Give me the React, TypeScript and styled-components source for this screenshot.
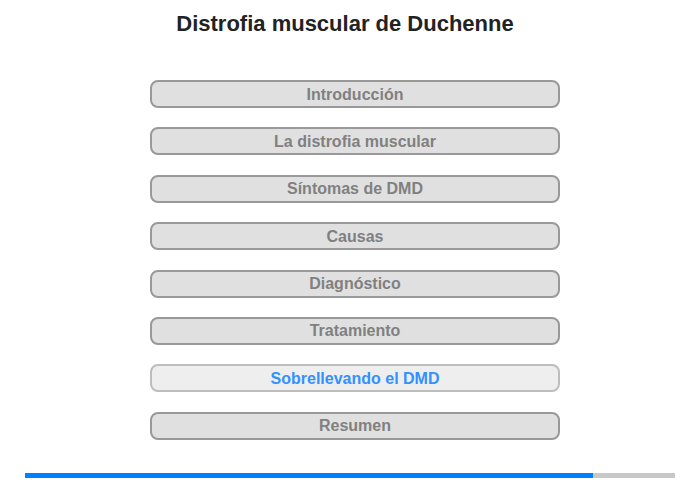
import styled, { createGlobalStyle } from "styled-components";

const GlobalStyle = createGlobalStyle`
  html, body {
    margin: 0;
    padding: 0;
    background: #ffffff;
  }
  body {
    font-family: "Liberation Sans", Arial, sans-serif;
  }
`;

const Page = styled.div`
  width: 700px;
  height: 480px;
  display: flex;
  flex-flow: column;
  overflow: hidden;
`;

const Title = styled.h1`
  margin: 11px 10px 0 0;
  height: 26px;
  font-size: 22px;
  line-height: 26px;
  font-weight: 700;
  color: #222222;
  text-align: center;
`;

const Menu = styled.nav`
  display: flex;
  flex-flow: column;
  gap: 19.4px;
  width: 410px;
  margin: 43px 0 0 150px;
`;

const MenuButton = styled.button<{ $active?: boolean }>`
  box-sizing: border-box;
  height: 28px;
  width: 100%;
  padding: 0;
  border-radius: 8px;
  border: 2px solid ${(p) => (p.$active ? "#bdbdbd" : "#999999")};
  background: ${(p) => (p.$active ? "#eeeeee" : "#e0e0e0")};
  color: ${(p) => (p.$active ? "#3390ff" : "#808080")};
  font-family: "Liberation Sans", Arial, sans-serif;
  font-size: 16px;
  font-weight: 700;
  line-height: 23px;
  text-align: center;
  cursor: pointer;
`;

const Progress = styled.div`
  display: flex;
  height: 5px;
  margin: auto 25px 2px 25px;
  background: #c8c8c8;
`;

const ProgressFill = styled.div`
  height: 100%;
  background: #0080ff;
`;

const items = [
  "Introducción",
  "La distrofia muscular",
  "Síntomas de DMD",
  "Causas",
  "Diagnóstico",
  "Tratamiento",
  "Sobrellevando el DMD",
  "Resumen",
];

const activeIndex = 6;

export default function App() {
  return (
    <Page>
      <GlobalStyle />
      <Title>Distrofia muscular de Duchenne</Title>
      <Menu>
        {items.map((label, i) => (
          <MenuButton key={label} $active={i === activeIndex}>
            {label}
          </MenuButton>
        ))}
      </Menu>
      <Progress>
        <ProgressFill style={{ width: `${(568 / 650) * 100}%` }} />
      </Progress>
    </Page>
  );
}
